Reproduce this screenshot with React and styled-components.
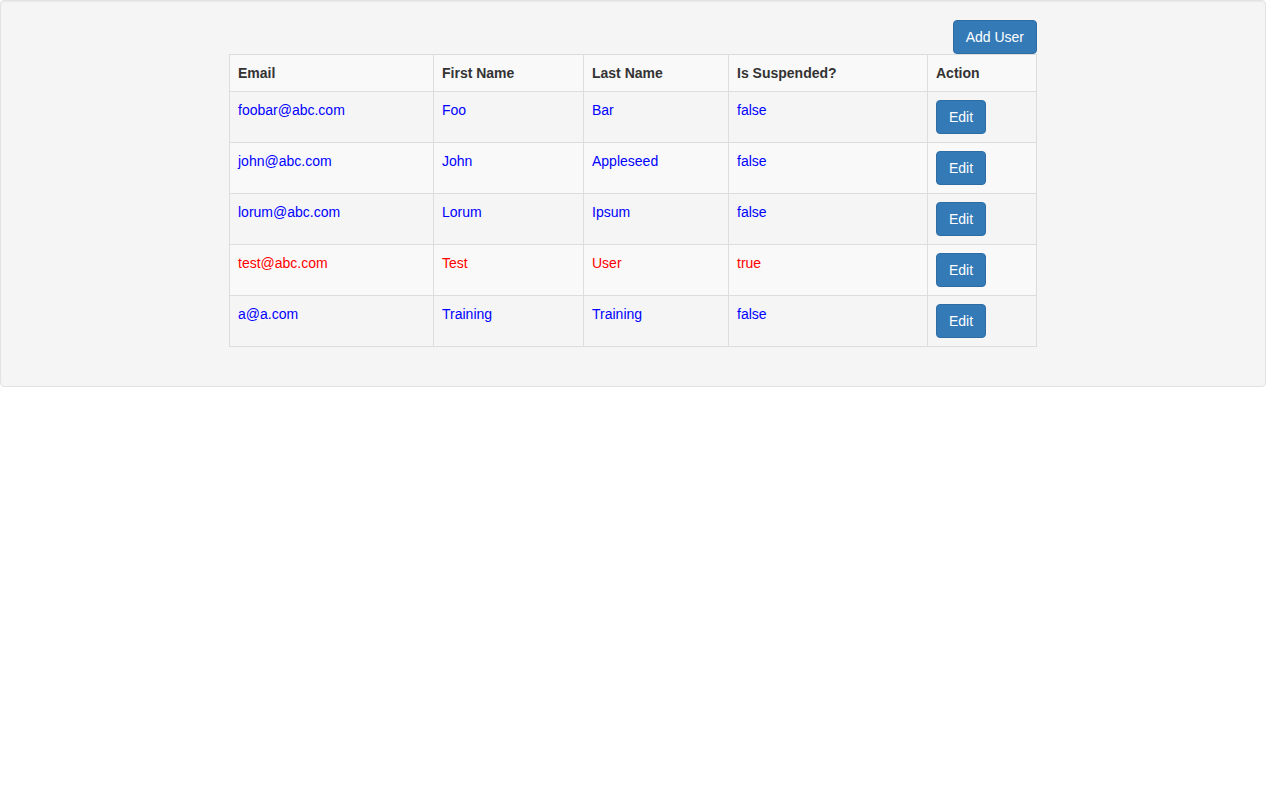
import React from "react";
import styled, { createGlobalStyle } from "styled-components";

const Global = createGlobalStyle`
  * { box-sizing: border-box; }
  html, body { margin: 0; padding: 0; background: #fff; }
  body {
    font-family: "Liberation Sans", Arial, Helvetica, sans-serif;
    font-size: 14px;
    line-height: 1.42857143;
    color: #333;
  }
`;

const Well = styled.div`
  min-height: 20px;
  padding: 19px;
  margin-bottom: 20px;
  background-color: #f5f5f5;
  border: 1px solid #e3e3e3;
  border-radius: 4px;
  box-shadow: inset 0 1px 1px rgba(0, 0, 0, 0.05);
`;

const Content = styled.div`
  width: 808px;
  margin: 0 auto;
  display: flex;
  flex-direction: column;
`;

const Toolbar = styled.div`
  display: flex;
  justify-content: flex-end;
`;

const Button = styled.button`
  display: inline-block;
  padding: 6px 12px;
  margin: 0;
  font-family: inherit;
  font-size: 14px;
  line-height: 1.42857143;
  color: #fff;
  background-color: #337ab7;
  border: 1px solid #2e6da4;
  border-radius: 4px;
  cursor: pointer;
  white-space: nowrap;
`;

const Table = styled.table`
  width: 808px;
  margin-bottom: 20px;
  border-collapse: collapse;
  border-spacing: 0;
  border: 1px solid #ddd;
  table-layout: fixed;
`;

const Col = styled.col`
  width: ${(p) => p.$w}px;
`;

const Row = styled.tr`
  background-color: ${(p) => (p.$odd ? "#f9f9f9" : "transparent")};
`;

const Th = styled.th`
  padding: 8px;
  text-align: left;
  vertical-align: bottom;
  font-weight: bold;
  border: 1px solid #ddd;
  line-height: 1.42857143;
`;

const Td = styled.td`
  padding: 8px;
  vertical-align: top;
  border: 1px solid #ddd;
  line-height: 1.42857143;
  color: ${(p) => (p.$suspended ? "#ff0000" : "#0000ff")};
`;

const ActionTd = styled.td`
  padding: 8px;
  vertical-align: top;
  border: 1px solid #ddd;
`;

const users = [
  { email: "foobar@abc.com", first: "Foo", last: "Bar", suspended: false },
  { email: "john@abc.com", first: "John", last: "Appleseed", suspended: false },
  { email: "lorum@abc.com", first: "Lorum", last: "Ipsum", suspended: false },
  { email: "test@abc.com", first: "Test", last: "User", suspended: true },
  { email: "a@a.com", first: "Training", last: "Training", suspended: false },
];

export default function App() {
  return (
    <>
      <Global />
      <Well>
        <Content>
          <Toolbar>
            <Button>Add User</Button>
          </Toolbar>
          <Table>
            <colgroup>
              <Col $w={204} />
              <Col $w={150} />
              <Col $w={145} />
              <Col $w={199} />
              <col />
            </colgroup>
            <tbody>
              <Row $odd>
                <Th>Email</Th>
                <Th>First Name</Th>
                <Th>Last Name</Th>
                <Th>Is Suspended?</Th>
                <Th>Action</Th>
              </Row>
              {users.map((u, i) => (
                <Row key={u.email} $odd={i % 2 === 1}>
                  <Td $suspended={u.suspended}>{u.email}</Td>
                  <Td $suspended={u.suspended}>{u.first}</Td>
                  <Td $suspended={u.suspended}>{u.last}</Td>
                  <Td $suspended={u.suspended}>{String(u.suspended)}</Td>
                  <ActionTd>
                    <Button>Edit</Button>
                  </ActionTd>
                </Row>
              ))}
            </tbody>
          </Table>
        </Content>
      </Well>
    </>
  );
}
